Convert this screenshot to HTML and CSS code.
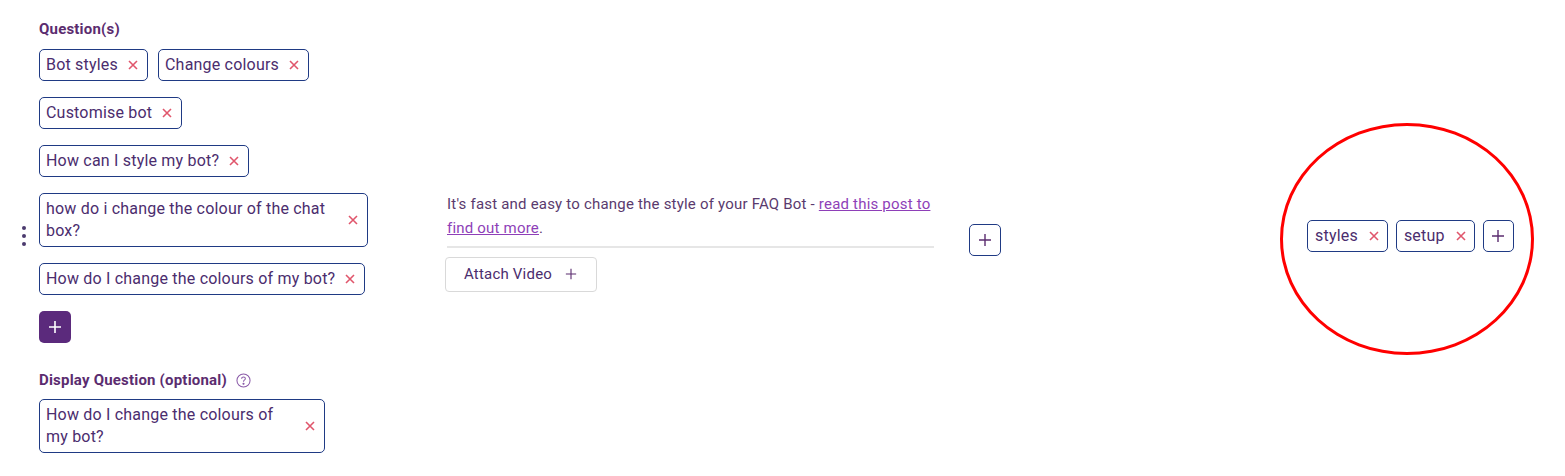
FILE: index.html
```html
<!DOCTYPE html>
<html lang="en">
<head>
  <meta charset="UTF-8">
  <title>FAQ Bot - Edit Question</title>
  <meta name="viewport" content="width=device-width, initial-scale=1.0">
  <link rel="stylesheet" href="styles.css">
</head>
<body>
  <div class="faq-row">
    <div class="kebab"><span></span><span></span><span></span></div>

    <div class="questions-col">
      <div class="field-label">Question(s)</div>
      <div class="chip-list">
        <span class="chip">Bot styles <svg class="chip-x" viewBox="0 0 10 10"><path d="M1 1L9 9M9 1L1 9"/></svg></span>
        <span class="chip">Change colours <svg class="chip-x" viewBox="0 0 10 10"><path d="M1 1L9 9M9 1L1 9"/></svg></span>
        <span class="chip">Customise bot <svg class="chip-x" viewBox="0 0 10 10"><path d="M1 1L9 9M9 1L1 9"/></svg></span>
        <span class="chip">How can I style my bot? <svg class="chip-x" viewBox="0 0 10 10"><path d="M1 1L9 9M9 1L1 9"/></svg></span>
        <span class="chip chip-wide"><span class="chip-text">how do i change the colour of the chat box?</span> <svg class="chip-x" viewBox="0 0 10 10"><path d="M1 1L9 9M9 1L1 9"/></svg></span>
        <span class="chip">How do I change the colours of my bot? <svg class="chip-x" viewBox="0 0 10 10"><path d="M1 1L9 9M9 1L1 9"/></svg></span>
        <button class="add-btn add-btn-filled" aria-label="Add question">
          <svg viewBox="0 0 14 14"><path d="M7 1V13M1 7H13"/></svg>
        </button>
      </div>

      <div class="field-label display-label">
        Display Question (optional)
        <svg class="help-icon" viewBox="0 0 16 16"><circle cx="8" cy="8" r="7"/><path d="M6 6.2C6 5 6.9 4.3 8 4.3C9.1 4.3 10 5 10 6C10 7.4 8 7.4 8 9.2"/><circle class="dot" cx="8" cy="11.5" r="0.6"/></svg>
      </div>
      <span class="chip chip-display"><span class="chip-text">How do I change the colours of my bot?</span> <svg class="chip-x" viewBox="0 0 10 10"><path d="M1 1L9 9M9 1L1 9"/></svg></span>
    </div>

    <div class="answer-col">
      <p class="answer-text">It's fast and easy to change the style of your FAQ Bot - <a href="#">read this post to find out more</a>.</p>
      <div class="answer-divider"></div>
      <button class="attach-btn">Attach Video <svg viewBox="0 0 14 14"><path d="M7 1V13M1 7H13"/></svg></button>
    </div>

    <button class="add-btn add-btn-outline add-answer" aria-label="Add answer">
      <svg viewBox="0 0 14 14"><path d="M7 1V13M1 7H13"/></svg>
    </button>

    <div class="tags-col">
      <span class="chip">styles <svg class="chip-x" viewBox="0 0 10 10"><path d="M1 1L9 9M9 1L1 9"/></svg></span>
      <span class="chip">setup <svg class="chip-x" viewBox="0 0 10 10"><path d="M1 1L9 9M9 1L1 9"/></svg></span>
      <button class="add-btn add-btn-outline add-tag" aria-label="Add tag">
        <svg viewBox="0 0 14 14"><path d="M7 1V13M1 7H13"/></svg>
      </button>
      <div class="highlight-ring"></div>
    </div>
  </div>
</body>
</html>
```

FILE: styles.css
```css
body {
  margin: 0;
  font-family: Roboto, "Liberation Sans", Arial, sans-serif;
  background: #ffffff;
  color: #4b2d6e;
}
.faq-row {
  display: flex;
  align-items: center;
  padding: 19px 0 0 22px;
}
.kebab {
  display: flex;
  flex-direction: column;
  gap: 4px;
  width: 4px;
  margin-right: 13px;
}
.kebab span {
  width: 4px;
  height: 4px;
  border-radius: 50%;
  background: #4b3a6e;
}
.questions-col {
  width: 329px;
  display: flex;
  flex-direction: column;
  align-items: flex-start;
}
.field-label {
  font-size: 15px;
  font-weight: 700;
  letter-spacing: 0.2px;
  line-height: 20px;
  color: #5b2c6f;
  margin-bottom: 10px;
  display: flex;
  align-items: center;
}
.display-label {
  margin-top: 27px;
  margin-bottom: 9px;
}
.help-icon {
  width: 15px;
  height: 15px;
  margin-left: 9px;
  fill: none;
  stroke: #8a5aa8;
  stroke-width: 1.1;
}
.help-icon .dot {
  fill: #8a5aa8;
}
.chip-list {
  display: flex;
  flex-wrap: wrap;
  gap: 16px 10px;
}
.chip {
  display: inline-flex;
  align-items: center;
  box-sizing: border-box;
  min-height: 32px;
  padding: 4px 9px 4px 6px;
  border: 1px solid #1f3a84;
  border-radius: 5px;
  font-size: 16px;
  letter-spacing: 0.2px;
  line-height: 22px;
  color: #4b2d6e;
  white-space: nowrap;
  gap: 10px;
}
.chip-text {
  white-space: normal;
}
.chip-wide {
  width: 329px;
  justify-content: space-between;
}
.chip-display {
  width: 286px;
  justify-content: space-between;
}
.chip-x {
  width: 10px;
  height: 10px;
  flex: none;
  fill: none;
  stroke: #e0566c;
  stroke-width: 1.6;
}
.add-btn {
  box-sizing: border-box;
  width: 32px;
  height: 32px;
  padding: 0;
  border-radius: 5px;
  display: flex;
  align-items: center;
  justify-content: center;
  cursor: pointer;
}
.add-btn svg {
  width: 14px;
  height: 14px;
  fill: none;
  stroke-width: 1.4;
}
.add-btn-filled {
  background: #5b2a7c;
  border: none;
}
.add-btn-filled svg {
  stroke: #ffffff;
  stroke-width: 1.6;
}
.add-btn-outline {
  background: #ffffff;
  border: 1px solid #1f3a84;
}
.add-btn-outline svg {
  stroke: #5b2c6f;
}
.answer-col {
  width: 487px;
  margin-left: 79px;
  margin-top: 11px;
}
.answer-text {
  margin: 0 0 6px;
  font-size: 15px;
  letter-spacing: 0.2px;
  line-height: 24px;
  color: #5a3a6e;
}
.answer-text a {
  color: #8e3fb8;
  text-decoration: underline;
}
.answer-divider {
  height: 2px;
  background: #e6e6e6;
  margin-bottom: 9px;
}
.attach-btn {
  margin-left: -2px;
  height: 35px;
  padding: 0 19px 0 18px;
  background: #ffffff;
  border: 1px solid #d9d9d9;
  border-radius: 4px;
  font-family: inherit;
  font-size: 15px;
  letter-spacing: 0.2px;
  color: #4b2d6e;
  display: flex;
  align-items: center;
  gap: 13px;
  cursor: pointer;
}
.attach-btn svg {
  width: 12px;
  height: 12px;
  fill: none;
  stroke: #5b2c6f;
  stroke-width: 1.3;
}
.add-answer {
  margin-left: 35px;
  margin-top: 7px;
}
.tags-col {
  position: relative;
  margin-left: 306px;
  margin-top: -1px;
  display: flex;
  align-items: center;
  gap: 8px;
}
.tags-col .chip {
  padding-left: 7px;
  padding-right: 8px;
  gap: 11px;
}
.add-tag {
  width: 31px;
}
.highlight-ring {
  position: absolute;
  left: -27px;
  top: -97px;
  width: 254px;
  height: 232px;
  box-sizing: border-box;
  border: 3px solid #ff0000;
  border-radius: 50%;
  pointer-events: none;
}
```
